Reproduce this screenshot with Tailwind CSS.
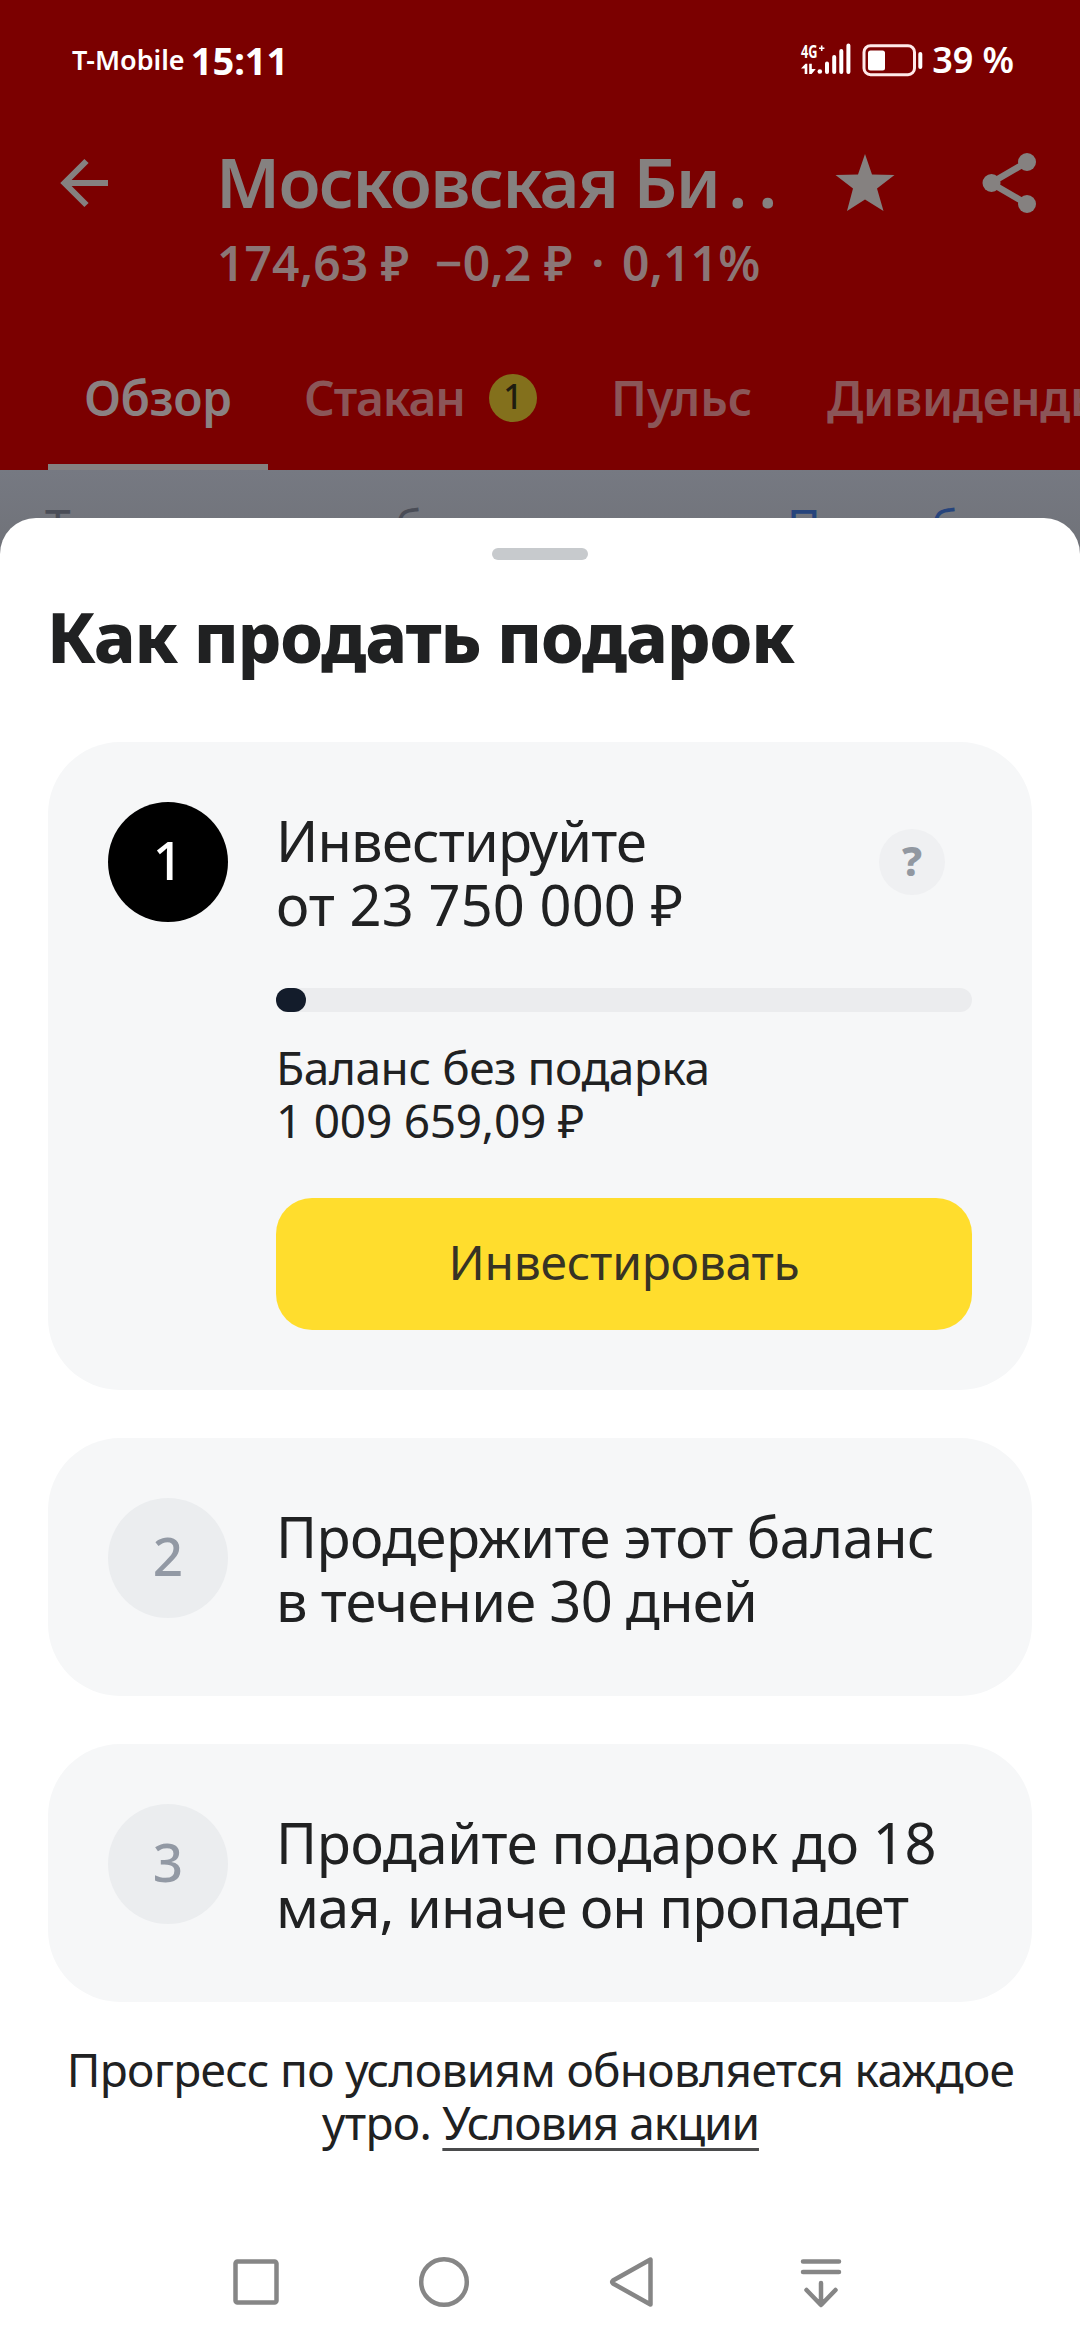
<!DOCTYPE html>
<html lang="ru">
<head>
<meta charset="utf-8">
<title>Как продать подарок</title>
<script src="https://cdn.jsdelivr.net/npm/@tailwindcss/browser@4"></script>
</head>
<body class="relative w-[1080px] h-[2340px] overflow-hidden bg-[#727479] font-['Noto_Sans',sans-serif] text-[#202122]">

<!-- Dimmed screen behind the sheet -->
<header class="h-[470px] bg-[#7b0000] text-[#858180] flex flex-col">
  <div class="mt-[30px] h-[60px] pl-[72px] pr-[66px] flex items-center text-white font-semibold whitespace-nowrap">
    <span class="text-[27px] leading-[60px]">T-Mobile</span>
    <span class="ml-[6px] text-[38px] leading-[60px] font-bold">15:11</span>
    <svg class="ml-auto" width="124" height="36" viewBox="800 42 124 36" fill="#fff">
      <text x="801" y="57.5" font-size="18" font-weight="700" textLength="16.5" lengthAdjust="spacingAndGlyphs">4G</text>
      <path d="M819 48.3h5.4M821.7 45.6V51" stroke="#fff" stroke-width="1.6" fill="none"/>
      <path d="M801 68.5l4.5-4.8h1.8V74h-2.6v-5.5zM809.2 63.7h2.6v5.3h4l-4.2 5h-2.4z"/>
      <circle cx="819.8" cy="71.5" r="2.3"/>
      <path d="M827 63.5V72M834.2 57V72M841.3 51V72M848.4 45.5V72" stroke="#fff" stroke-width="4" stroke-linecap="round"/>
      <rect x="864" y="45.7" width="50.5" height="29" rx="6.5" fill="none" stroke="#ffe9e9" stroke-width="3"/>
      <rect x="868" y="50.5" width="17" height="20" rx="2.5"/>
      <rect x="918.3" y="52" width="4" height="17" rx="2"/>
    </svg>
    <span class="ml-[8px] text-[36px] leading-[60px] tracking-[-0.1px]">39 %</span>
  </div>

  <div class="mt-[50px] h-[152px] flex items-start">
    <svg class="ml-[58px] mt-[17px]" width="52" height="52" viewBox="58 157 52 52" fill="none" stroke="currentColor" stroke-width="6">
      <path d="M86.5 161L64.500 183L86.500 205M63.500 183H108"/>
    </svg>
    <div class="ml-[107px] w-[599px] flex flex-col gap-3 font-semibold whitespace-nowrap">
      <div class="-ml-px mt-px flex text-[69px] leading-[80px]"><span class="tracking-[-1.7px]">Московская Би</span><span class="ml-[9px] tracking-[11px]">..</span></div>
      <div class="flex text-[48px] leading-[60px] tracking-[0.1px] text-[#8b7676]">
        <span class="w-[218px]">174,63 ₽</span>
        <span class="w-[153px]">−0,2 ₽</span>
        <span class="w-[20px] text-center">·</span>
        <span class="ml-[14px]">0,11%</span>
      </div>
    </div>
    <svg class="ml-[18px] mt-[12px]" width="62" height="62" viewBox="833 152 62 62" fill="currentColor">
      <path d="M864 154L871 174.500L893.500 175L876 188.500L882.500 211L864 199.500L846 211L852 188.500L834.500 175L857 174.500Z"/>
    </svg>
    <svg class="ml-[84px] mt-[10px]" width="60" height="66" viewBox="979 150 60 66" fill="currentColor">
      <path d="M1026 162L990 183L1026 204" fill="none" stroke="currentColor" stroke-width="6.500"/>
      <circle cx="1026" cy="162" r="9"/><circle cx="990.500" cy="183" r="9"/><circle cx="1026" cy="204" r="9"/>
    </svg>
  </div>

  <nav class="mt-[76px] h-[102px] pl-12 flex overflow-hidden whitespace-nowrap font-semibold text-[48px] leading-[60px] text-[#8b5658]">
    <div class="w-[220px] shrink-0 pl-9 border-b-[6px] border-[#858180] text-[#8b8182] tracking-[-0.5px]">Обзор</div>
    <div class="w-[305px] shrink-0 pl-9 flex justify-between">
      <span class="tracking-[-1.2px]">Стакан</span>
      <span class="mr-9 mt-[6px] size-12 rounded-full bg-[#83701c] text-[#1e1c10] text-[34px] leading-[45px] font-medium text-center">1</span>
    </div>
    <div class="w-[218px] shrink-0 pl-[38px]">Пульс</div>
    <div class="shrink-0 pl-9 tracking-[-0.3px]">Дивиденды</div>
  </nav>
</header>
<div class="h-[120px] pt-[25px] pl-[45px] bg-linear-to-b from-[#767982] to-[#6d6f74] flex text-[46px] leading-[60px] text-[#4a4d57]">
  <span class="w-[350px]">Т</span>
  <span class="w-[392px]">б</span>
  <span class="w-[144px] text-[#26447c]">П</span>
  <span class="text-[#26447c]">б</span>
</div>

<!-- Bottom sheet -->
<main class="absolute inset-x-0 top-[518px] bottom-0 rounded-t-[36px] bg-white flex flex-col px-12">
  <div class="mt-[30px] h-3 w-24 shrink-0 self-center rounded-full bg-[#c7cacd]"></div>
  <h1 class="mt-9 -ml-px text-[69px] leading-[80px] font-extrabold tracking-[-1.25px] whitespace-nowrap">Как продать подарок</h1>

  <div class="mt-[66px] flex flex-col gap-12">
    <section class="h-[648px] rounded-[72px] bg-[#f6f7f8] p-[60px] flex gap-12">
      <div class="size-[120px] shrink-0 rounded-full bg-black text-white text-[53px] leading-[116px] font-medium text-center">1</div>
      <div class="flex-1 flex flex-col">
        <div class="mt-[6px] h-[127px] flex">
          <h2 class="flex-1 text-[56px] leading-[64px] whitespace-nowrap"><span class="block tracking-[-0.8px]">Инвестируйте</span><span class="block tracking-[0.1px]">от 23 750 000 ₽</span></h2>
          <div class="mr-[27px] mt-[21px] size-[66px] rounded-full bg-[#eff0f2] text-[#9298a1] text-[41px] leading-[62px] font-extrabold text-center">?</div>
        </div>
        <div class="mt-[53px] h-6 rounded-full bg-[#ebecee]"><div class="h-6 rounded-full bg-[#131c2b]" style="width:4.25%"></div></div>
        <p class="mt-[29px] text-[46px] leading-[53px] whitespace-nowrap"><span class="block tracking-[-0.45px]">Баланс без подарка</span><span class="block tracking-[-0.25px]">1 009 659,09 ₽</span></p>
        <button class="mt-[51px] h-[132px] rounded-[36px] bg-[#ffdd2d] pb-[4px] text-[48px] tracking-[-0.28px] text-[#373324]">Инвестировать</button>
      </div>
    </section>

    <section class="h-[258px] rounded-[72px] bg-[#f6f7f8] p-[60px] flex gap-12">
      <div class="size-[120px] shrink-0 rounded-full bg-[#ebedef] text-[#9299a4] text-[53px] leading-[116px] font-medium text-center">2</div>
      <h2 class="mt-[6px] text-[56px] leading-[64px] whitespace-nowrap"><span class="block tracking-[-0.55px]">Продержите этот баланс</span><span class="block tracking-[-0.7px]">в течение 30 дней</span></h2>
    </section>

    <section class="h-[258px] rounded-[72px] bg-[#f6f7f8] p-[60px] flex gap-12">
      <div class="size-[120px] shrink-0 rounded-full bg-[#ebedef] text-[#9299a4] text-[53px] leading-[116px] font-medium text-center">3</div>
      <h2 class="mt-[6px] text-[56px] leading-[64px] whitespace-nowrap"><span class="block tracking-[-0.35px]">Продайте подарок до 18</span><span class="block tracking-[-0.98px]">мая, иначе он пропадет</span></h2>
    </section>
  </div>

  <p class="mt-[41px] pl-px text-center text-[46px] leading-[53px] tracking-[-0.68px] whitespace-nowrap">Прогресс по условиям обновляется каждое<br>утро. <a class="underline decoration-[3px] underline-offset-[8px] [text-decoration-skip-ink:none] decoration-[#4a4b4c] tracking-[-1.1px]">Условия акции</a></p>

  <!-- System navigation -->
  <nav class="mt-auto mb-[31px] ml-[114px] w-[752px] grid grid-cols-4 justify-items-center text-[#868686]">
    <svg width="54" height="54" viewBox="0 0 54 54" fill="none" stroke="currentColor" stroke-width="4.500"><rect x="6.500" y="6.500" width="41" height="41" rx="2"/></svg>
    <svg width="54" height="54" viewBox="0 0 54 54" fill="none" stroke="currentColor" stroke-width="4.500"><circle cx="27" cy="27" r="22.800"/></svg>
    <svg width="54" height="54" viewBox="0 0 54 54" fill="none" stroke="currentColor" stroke-width="4.500" stroke-linejoin="round"><path d="M45.500 4.500V49.500L8 28.500Q6.500 27 8 25.500Z"/></svg>
    <svg width="54" height="54" viewBox="0 0 54 54" fill="none" stroke="currentColor" stroke-width="4.500" stroke-linecap="round" stroke-linejoin="round"><path d="M10 6.500H46M10 17H46M28 28V49.500M13.500 35L28 50L42.500 35"/></svg>
  </nav>
</main>
</body>
</html>
